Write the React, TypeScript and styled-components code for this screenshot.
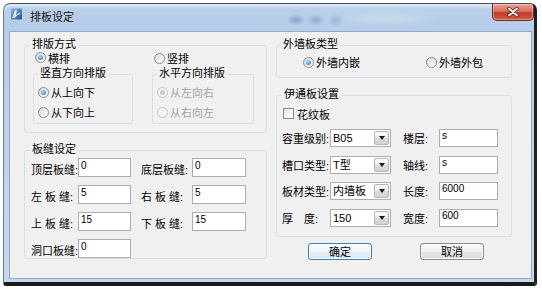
import React from "react";
import styled, { createGlobalStyle } from "styled-components";

const GlobalStyle = createGlobalStyle`
  html, body { margin: 0; padding: 0; background: #fff; }
  body {
    font-family: "Liberation Sans", "Noto Sans CJK SC", sans-serif;
    font-size: 11px;
    color: #000;
  }
`;

const Window = styled.div`
  box-sizing: border-box;
  margin: 3px 0 0 3px;
  width: 534px;
  height: 283px;
  border-style: solid;
  border-color: #4b4f55 #202020 #1b1b1b #6f7d8c;
  border-width: 1px 3px 4px 1px;
  border-radius: 7px 7px 3px 3px;
  background: linear-gradient(180deg, #d3e2f2 0px, #b9d0ea 4px, #b6cee9 20px, #bed4ec 60%, #c4d8ee 100%);
  display: flex;
  flex-direction: column;
  overflow: hidden;
`;

const TitleBar = styled.div`
  flex: 0 0 27px;
  display: flex;
  align-items: flex-start;
  padding-left: 7px;
  background:
    radial-gradient(ellipse 9px 6px at 292px 16px, rgba(70, 110, 170, 0.45), transparent),
    radial-gradient(ellipse 9px 6px at 312px 16px, rgba(70, 110, 170, 0.35), transparent),
    radial-gradient(ellipse 8px 6px at 332px 16px, rgba(70, 110, 170, 0.3), transparent),
    radial-gradient(ellipse 60px 10px at 380px 14px, rgba(255, 255, 255, 0.25), transparent),
    linear-gradient(180deg, rgba(255, 255, 255, 0.35) 0px, rgba(255, 255, 255, 0) 6px);
`;

const AppIcon = styled.svg`
  margin-top: 4px;
  flex: 0 0 auto;
`;

const Title = styled.span`
  margin: 5px 0 0 8px;
  line-height: 14px;
  font-size: 11px;
  font-family: "Noto Sans CJK SC", sans-serif;
  color: #111;
`;

const CloseButton = styled.div`
  margin-left: auto;
  box-sizing: border-box;
  width: 42px;
  height: 17px;
  border: 1px solid #6b2a20;
  border-top: none;
  border-radius: 0 0 5px 5px;
  background: linear-gradient(180deg, #e9a294 0%, #d9705e 45%, #c23c26 55%, #d45a44 100%);
  box-shadow: inset 0 0 0 1px rgba(255, 255, 255, 0.35);
  display: flex;
  align-items: center;
  justify-content: center;
`;

const Client = styled.div`
  flex: 0 0 248px;
  box-sizing: border-box;
  margin: 0 2px 0 5px;
  border: 1px solid #8fa9c6;
  background: #f0f0f0;
  padding: 5px 0 0 14px;
  display: grid;
  grid-template-columns: 243px 236px;
  column-gap: 9px;
  align-items: start;
`;

const Column = styled.div`
  display: flex;
  flex-direction: column;
`;

const Group = styled.fieldset<{ $pad: string; $top?: number }>`
  margin: ${(p) => p.$top ?? 0}px 0 0 0;
  padding: ${(p) => p.$pad};
  border: 1px solid #d5dfe5;
  border-radius: 3px;
  min-width: 0;
  box-sizing: border-box;
`;

const Legend = styled.legend`
  padding: 0 2px 3px;
  line-height: 13px;
  font-size: 11px;
  font-family: "Noto Sans CJK SC", sans-serif;
`;

const ModeGrid = styled.div`
  display: grid;
  grid-template-columns: 100px 102px;
  grid-template-rows: 14px auto;
  column-gap: 19px;
  padding-left: 3px;
  margin-top: -1px;
`;

const RadioItem = styled.label<{ $disabled?: boolean; $indent?: number; $h?: number; $align?: string }>`
  display: flex;
  align-items: ${(p) => p.$align ?? "center"};
  gap: 2px;
  height: ${(p) => p.$h ?? 14}px;
  line-height: 12px;
  margin-left: ${(p) => p.$indent ?? 0}px;
  color: ${(p) => (p.$disabled ? "#a3a3a3" : "#000")};
  font-family: "Noto Sans CJK SC", sans-serif;
  font-size: 11px;
  white-space: nowrap;
`;

const RadioDot = styled.span<{ $checked?: boolean; $disabled?: boolean }>`
  box-sizing: border-box;
  flex: 0 0 auto;
  width: 11px;
  height: 11px;
  border-radius: 50%;
  border: 1px solid ${(p) => (p.$disabled ? "#c4c4c4" : "#8a8a8a")};
  background: ${(p) =>
    p.$disabled ? "#f4f4f4" : "linear-gradient(135deg, #d4d4d4 0%, #f2f2f2 60%, #ffffff 100%)"};
  display: flex;
  align-items: center;
  justify-content: center;
  &::after {
    content: "";
    width: 5px;
    height: 5px;
    border-radius: 50%;
    display: ${(p) => (p.$checked ? "block" : "none")};
    background: ${(p) =>
      p.$disabled ? "#c9c9c9" : "radial-gradient(circle at 40% 35%, #b4e0ff 0%, #4a9ee3 60%, #2268b8 100%)"};
  }
`;

const SubGroup = styled.fieldset`
  margin: 0;
  padding: 3px 4px 4px 4px;
  border: 1px solid #d5dfe5;
  border-radius: 3px;
  min-width: 0;
  display: flex;
  flex-direction: column;
  gap: 6px;
`;

const SeamGrid = styled.div`
  display: grid;
  grid-template-columns: 48px 53px 61px 54px;
  grid-auto-rows: 19px;
  row-gap: 8px;
`;

const FieldLabel = styled.span<{ $indent?: number; $drop?: number }>`
  display: flex;
  align-items: center;
  padding-left: ${(p) => p.$indent ?? 1}px;
  padding-top: ${(p) => p.$drop ?? 0}px;
  font-family: "Liberation Sans", "Noto Sans CJK SC", sans-serif;
  font-size: 11px;
  white-space: pre;
`;

const Edit = styled.input<{ $h: number }>`
  box-sizing: border-box;
  width: 100%;
  height: ${(p) => p.$h}px;
  margin: 0;
  padding: 0 2px 5px;
  border: 1px solid #abadb3;
  border-radius: 0;
  background: #fff;
  font: 10px "Liberation Sans", sans-serif;
  color: #000;
  outline: none;
`;

const TypeRow = styled.div`
  display: grid;
  grid-template-columns: 123px auto;
  padding-left: 22px;
`;

const CheckItem = styled.label`
  display: flex;
  align-items: center;
  gap: 3px;
  height: 13px;
  margin-left: 1px;
  font-family: "Noto Sans CJK SC", sans-serif;
  font-size: 11px;
`;

const CheckBox = styled.span`
  box-sizing: border-box;
  width: 11px;
  height: 11px;
  border: 1px solid #8a8a8a;
  background: linear-gradient(135deg, #e2e2e2 0%, #fbfbfb 70%, #ffffff 100%);
`;

const PanelGrid = styled.div`
  display: grid;
  grid-template-columns: 48px 61px 48px 59px;
  grid-auto-rows: 18px;
  row-gap: 8.5px;
  margin-top: 9px;
`;

const Combo = styled.div`
  box-sizing: border-box;
  height: 18px;
  border: 1px solid #abadb3;
  background: #fff;
  display: flex;
  align-items: center;
  padding: 1px;
`;

const ComboText = styled.span`
  flex: 1;
  padding-left: 1px;
  font-family: "Liberation Sans", "Noto Sans CJK SC", sans-serif;
  font-size: 11px;
  line-height: 14px;
  white-space: nowrap;
  overflow: hidden;
`;

const ComboButton = styled.span`
  box-sizing: border-box;
  width: 15px;
  height: 14px;
  border: 1px solid #b5b5b5;
  border-radius: 2px;
  background: linear-gradient(180deg, #fbfbfb 0%, #ececec 50%, #dcdcdc 51%, #d4d4d4 100%);
  display: flex;
  align-items: center;
  justify-content: center;
  &::after {
    content: "";
    width: 0;
    height: 0;
    border-left: 3.5px solid transparent;
    border-right: 3.5px solid transparent;
    border-top: 4px solid #1a1a1a;
  }
`;

const ButtonRow = styled.div`
  display: flex;
  gap: 48px;
  padding-left: 32px;
  margin-top: 6px;
`;

const PushButton = styled.button<{ $default?: boolean }>`
  box-sizing: border-box;
  width: 64px;
  height: 17px;
  padding: 0;
  border: 1px solid ${(p) => (p.$default ? "#3c7fb1" : "#8a8a8a")};
  border-radius: 3px;
  background: ${(p) =>
    p.$default
      ? "linear-gradient(180deg, #fbfdfe 0%, #eef5fb 50%, #e1ecf6 51%, #dbe8f4 100%)"
      : "linear-gradient(180deg, #f9f9f9 0%, #f0f0f0 50%, #e4e4e4 51%, #dedede 100%)"};
  box-shadow: inset 0 0 0 1px rgba(255, 255, 255, 0.8);
  font-family: "Noto Sans CJK SC", sans-serif;
  font-size: 11px;
  line-height: 13px;
  color: #000;
`;

type SeamRow = [string, string, string, string];

const seamRows: SeamRow[] = [
  ["顶层板缝:", "0", "底层板缝: ", "0"],
  ["左 板 缝:", "5", "右 板 缝: ", "5"],
  ["上 板 缝:", "15", "下 板 缝: ", "15"],
];

const panelRows = [
  { label: "容重级别:", combo: "B05", label2: "楼层:", value: "s" },
  { label: "槽口类型:", combo: "T型", label2: "轴线:", value: "s" },
  { label: "板材类型:", combo: "内墙板", label2: "长度:", value: "6000" },
  { label: "厚　度:", combo: "150", label2: "宽度:", value: "600" },
];

function Radio({
  text,
  checked,
  disabled,
  indent,
  h,
  align,
}: {
  text: string;
  checked?: boolean;
  disabled?: boolean;
  indent?: number;
  h?: number;
  align?: string;
}) {
  return (
    <RadioItem $disabled={disabled} $indent={indent} $h={h} $align={align}>
      <RadioDot $checked={checked} $disabled={disabled} />
      {text}
    </RadioItem>
  );
}

export default function App() {
  return (
    <>
      <GlobalStyle />
      <Window>
        <TitleBar>
          <AppIcon width="11" height="12" viewBox="0 0 11 12">
            <defs>
              <linearGradient id="ic" x1="0" y1="0" x2="1" y2="1">
                <stop offset="0" stopColor="#7fb3e6" />
                <stop offset="1" stopColor="#23548f" />
              </linearGradient>
            </defs>
            <rect x="0" y="0.5" width="11" height="11" rx="1" fill="url(#ic)" />
            <path d="M2 9.5 C3 7 3.5 4 5 2.5 C5.6 4.5 4 7 3.8 9 C5 7.5 6.5 6 8.8 5.5" stroke="#fff" strokeWidth="1.1" fill="none" strokeLinecap="round" />
          </AppIcon>
          <Title>排板设定</Title>
          <CloseButton>
            <svg width="12" height="10" viewBox="0 0 12 10">
              <path d="M2 1.5 L10 8.5 M10 1.5 L2 8.5" stroke="#5a1d14" strokeWidth="3.4" strokeLinecap="round" />
              <path d="M2 1.5 L10 8.5 M10 1.5 L2 8.5" stroke="#fff" strokeWidth="1.8" strokeLinecap="round" />
            </svg>
          </CloseButton>
        </TitleBar>
        <Client>
          <Column>
            <Group $pad="0 5px 8px 5px">
              <Legend>排版方式</Legend>
              <ModeGrid>
                <Radio text="横排" checked indent={2} h={12} align="flex-start" />
                <Radio text="竖排" indent={2} h={12} align="flex-end" />
                <SubGroup>
                  <Legend>竖直方向排版</Legend>
                  <Radio text="从上向下" checked />
                  <Radio text="从下向上" />
                </SubGroup>
                <SubGroup>
                  <Legend>水平方向排版</Legend>
                  <Radio text="从左向右" checked disabled />
                  <Radio text="从右向左" disabled />
                </SubGroup>
              </ModeGrid>
            </Group>
            <Group $pad="0 5px 0 5px" $top={9}>
              <Legend>板缝设定</Legend>
              <SeamGrid>
                {seamRows.map(([l1, v1, l2, v2]) => (
                  <React.Fragment key={l1}>
                    <FieldLabel $drop={3}>{l1}</FieldLabel>
                    <Edit $h={19} readOnly value={v1} />
                    <FieldLabel $drop={3} $indent={10}>{l2}</FieldLabel>
                    <Edit $h={19} readOnly value={v2} />
                  </React.Fragment>
                ))}
                <FieldLabel $drop={3}>洞口板缝:</FieldLabel>
                <Edit $h={19} readOnly value="0" />
              </SeamGrid>
            </Group>
          </Column>
          <Column>
            <Group $pad="2px 5px 8px 4px">
              <Legend>外墙板类型</Legend>
              <TypeRow>
                <Radio text="外墙内嵌" checked />
                <Radio text="外墙外包" />
              </TypeRow>
            </Group>
            <Group $pad="4px 5px 9px 5px" $top={9}>
              <Legend>伊通板设置</Legend>
              <CheckItem>
                <CheckBox />
                花纹板
              </CheckItem>
              <PanelGrid>
                {panelRows.map((r) => (
                  <React.Fragment key={r.label}>
                    <FieldLabel $indent={0}>{r.label}</FieldLabel>
                    <Combo>
                      <ComboText>{r.combo}</ComboText>
                      <ComboButton />
                    </Combo>
                    <FieldLabel $indent={12}>{r.label2}</FieldLabel>
                    <Edit $h={18} readOnly value={r.value} />
                  </React.Fragment>
                ))}
              </PanelGrid>
            </Group>
            <ButtonRow>
              <PushButton $default>确定</PushButton>
              <PushButton>取消</PushButton>
            </ButtonRow>
          </Column>
        </Client>
      </Window>
    </>
  );
}
